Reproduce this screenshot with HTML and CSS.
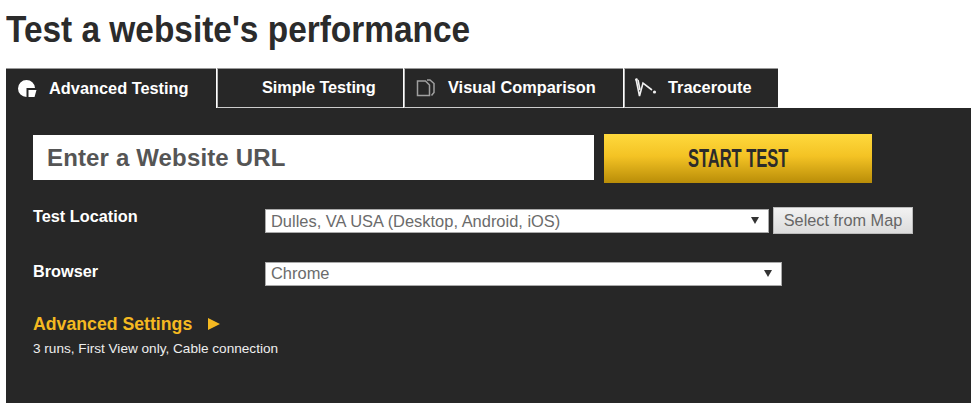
FILE: index.html
```html
<!DOCTYPE html>
<html lang="en">

<head>
  <meta charset="UTF-8">
  <meta name="viewport" content="width=device-width, initial-scale=1.0">
  <title>Test a website's performance</title>
  <link rel="stylesheet" href="styles.css">
</head>

<body>
  <h1 class="title">Test a website's performance</h1>

  <ul class="tabs">
    <li class="tab tab-advanced active">
      <svg class="tab-icon" width="20" height="20" viewBox="0 0 20 20">
        <path d="M9.500 2a8.500 8.500 0 1 0 0 17v-9h8.500a8.500 8.500 0 0 0-8.500-8z" fill="#fff" />
        <path d="M11.500 12h8l-2 7h-6z" fill="#fff" />
      </svg>
      Advanced Testing
    </li>
    <li class="tab tab-simple">Simple Testing</li>
    <li class="tab tab-visual">
      <svg class="tab-icon" width="20" height="20" viewBox="0 0 20 20" fill="none" stroke="#a0a0a0" stroke-width="1.500">
        <path d="M1.500 3h8l4 4v10.500h-12z" />
        <path d="M11 2h3l4 3.500v9l-2.500 3" />
      </svg>
      Visual Comparison
    </li>
    <li class="tab tab-trace">
      <svg class="tab-icon" width="22" height="24" viewBox="0 0 22 24" fill="none" stroke="#f0f0f0" stroke-width="1.600">
        <path d="M1 3l3.500 17 3.500-13 9 7" />
        <path d="M3 4l2 10" />
        <circle cx="1.500" cy="3.500" r="1.300" fill="#f0f0f0" stroke="none" />
        <circle cx="19.500" cy="16" r="1.600" fill="#f0f0f0" stroke="none" />
      </svg>
      Traceroute
    </li>
  </ul>

  <form class="panel">
    <div class="url-row">
      <input class="url-input" type="text" placeholder="Enter a Website URL">
      <button class="start-btn" type="button"><span>START TEST</span></button>
    </div>

    <div class="field field-location">
      <label>Test Location</label>
      <div class="select select-location">Dulles, VA USA (Desktop, Android, iOS)</div>
      <button class="map-btn" type="button">Select from Map</button>
    </div>

    <div class="field field-browser">
      <label>Browser</label>
      <div class="select select-browser">Chrome</div>
    </div>

    <div class="advanced">
      Advanced Settings
      <span class="arrow"></span>
    </div>
    <div class="summary">3 runs, First View only, Cable connection</div>
  </form>
</body>

</html>
```

FILE: styles.css
```css
* {
  margin: 0;
  padding: 0;
  box-sizing: border-box;
  font-family: "Liberation Sans", Arial, sans-serif;
}

body {
  width: 979px;
  height: 412px;
  padding: 9px 8px 0 6px;
  background: white;
  overflow: hidden;
}

.title {
  height: 59px;
  font-size: 37px;
  line-height: 42px;
  font-weight: bold;
  color: #2b2b2b;
  white-space: nowrap;
  transform: scaleX(0.903);
  transform-origin: left;
}

.tabs {
  display: flex;
  list-style: none;
  height: 40px;
}

.tab {
  display: flex;
  align-items: center;
  height: 40px;
  margin-right: 1px;
  padding-bottom: 1px;
  background: #272727;
  border-top: 1px solid #999;
  border-left: 1px solid #bbb;
  border-bottom: 1px solid #ccc;
  color: white;
  font-size: 16.350px;
  font-weight: bold;
}

.tab.active {
  border-left: 0;
  border-bottom: 0;
}

.tab-advanced {
  width: 210px;
  padding-left: 11px;
}

.tab-simple {
  width: 186px;
  padding-left: 44px;
  letter-spacing: -0.1px;
}

.tab-visual {
  width: 219px;
  padding-left: 11px;
}

.tab-trace {
  width: 154px;
  padding-left: 10px;
}

.tab-icon {
  margin-right: 12px;
  flex-shrink: 0;
}

.tab-trace .tab-icon {
  margin-right: 11px;
}

.panel {
  height: 295px;
  padding: 26px 27px 0;
  background: #272727;
  color: white;
}

.url-row {
  display: flex;
  align-items: flex-start;
  gap: 10px;
  margin-bottom: 24px;
}

.url-input {
  width: 561px;
  height: 45px;
  margin-top: 1px;
  padding: 0 14px;
  border: 0;
  background: white;
  font-size: 24px;
  letter-spacing: 0.15px;
  font-weight: bold;
  color: #555;
}

.url-input::placeholder {
  color: #555;
  opacity: 1;
}

.start-btn {
  width: 268px;
  height: 49px;
  border: 0;
  background: linear-gradient(#ffd93d, #f4c324 45%, #b98d08);
  color: #2b2b2b;
  font-size: 25px;
  font-weight: bold;
}

/* letra condensada */
.start-btn span {
  display: inline-block;
  transform: scaleX(0.66);
}

.field {
  display: flex;
  align-items: flex-start;
}

.field label {
  width: 232px;
  font-size: 16.300px;
  font-weight: bold;
  line-height: 18px;
}

.field-location {
  height: 55px;
}

.field-browser {
  height: 51px;
}

.select {
  position: relative;
  height: 24px;
  padding-left: 5px;
  background: white;
  border: 1px solid #aaa;
  color: #6b6b6b;
  font-size: 16.450px;
  line-height: 22px;
}

/* flecha del select */
.select::after {
  content: "";
  position: absolute;
  right: 9px;
  top: 7px;
  border-top: 7px solid #333;
  border-left: 4px solid transparent;
  border-right: 4px solid transparent;
}

.select-location {
  width: 504px;
  margin-top: 2px;
}

.select-browser {
  width: 517px;
  line-height: 20px;
}

.map-btn {
  width: 140px;
  height: 27px;
  margin-left: 4px;
  background: linear-gradient(#f2f2f2, #dcdcdc);
  border: 1px solid #bbb;
  color: #666;
  font-size: 16.300px;
}

.advanced {
  display: flex;
  align-items: center;
  gap: 16px;
  height: 22px;
  color: #f5b921;
  font-size: 17.700px;
  font-weight: bold;
}

.arrow {
  border-left: 12px solid #f5b921;
  border-top: 6px solid transparent;
  border-bottom: 6px solid transparent;
}

.summary {
  margin-top: 6px;
  font-size: 13.600px;
  line-height: 16px;
  color: #eee;
}
```
